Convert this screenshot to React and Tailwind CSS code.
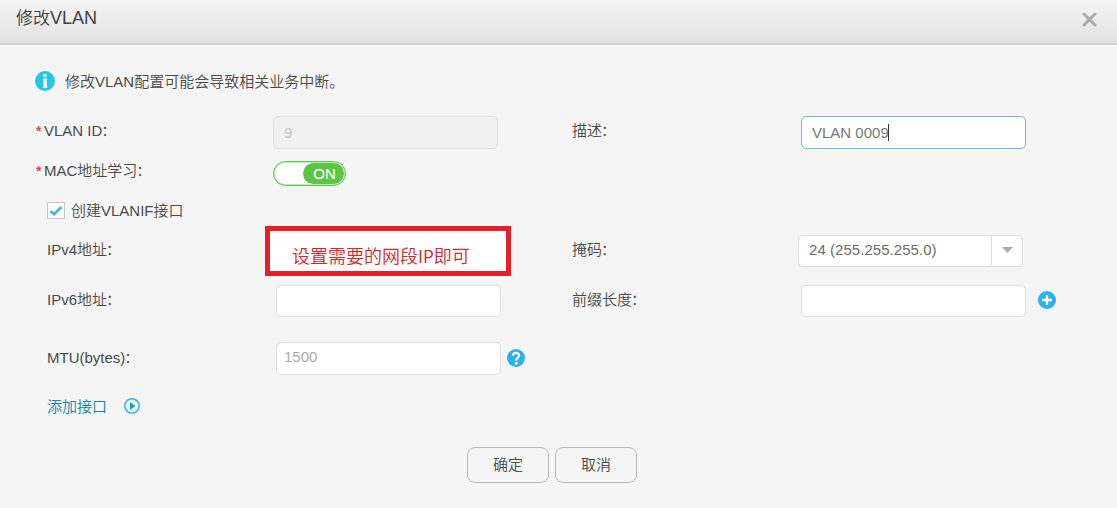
import React, { useState } from "react";

const Label = ({ text }) => (
  <>
    {text}
    <span className="-ml-px">：</span>
  </>
);

const Row = ({ className, label, required, children, label2, control2 }) => (
  <div className={`flex items-center ${className}`}>
    <div className="w-[237px] shrink-0 flex items-center">
      <span className="w-[8px] h-5 leading-[20px] text-[14px] font-bold text-[#e0444c]">
        {required ? "*" : ""}
      </span>
      <span className={required ? "" : "ml-[3px] pb-[2px]"}>
        <Label text={label} />
      </span>
    </div>
    <div className="w-[299px] shrink-0 flex items-center">{children}</div>
    <div className={`w-[227px] shrink-0 ${required ? "" : "pb-[2px]"}`}>
      {label2 && <Label text={label2} />}
    </div>
    <div className="flex items-center">{control2}</div>
  </div>
);

const Toggle = ({ on, onClick }) => (
  <button
    type="button"
    onClick={onClick}
    className="mt-[5px] flex h-[25px] w-[73px] justify-end rounded-full border border-[#62c74e] bg-white p-px ring-1 ring-inset ring-[#62c74e]/40"
  >
    <span className="flex h-[21px] w-[41px] items-center justify-center rounded-full bg-[#5cc548] pl-[2px] text-[15px] text-white">
      {on ? "ON" : "OFF"}
    </span>
  </button>
);

const Input = ({ className, ...props }) => (
  <input
    className={`w-[225px] rounded-[5px] border outline-none ${className}`}
    {...props}
  />
);

const App = () => {
  const [learning, setLearning] = useState(true);

  return (
    <div className="h-[508px] w-[1117px] overflow-hidden bg-[#f5f5f5] font-['Liberation_Sans','Noto_Sans_CJK_SC',sans-serif] text-[15px] font-[350] leading-5 text-[#4a4a4a]">
      {/* Title bar */}
      <div className="flex h-[45px] items-start justify-between border-b-2 border-[#d2d2d2] bg-gradient-to-b from-[#f5f5f5] to-[#e2e2e2] pl-4 pr-[20px]">
        <h1 className="mt-[6px] text-[17px] leading-6 text-[#404040]">
          修改<span className="text-[18px]">VLAN</span>
        </h1>
        <svg className="mt-[12px]" width="15" height="15" viewBox="0 0 15 15">
          <path
            d="M2 2L13 13M13 2L2 13"
            stroke="#aaa"
            strokeWidth="3"
            strokeLinecap="round"
          />
        </svg>
      </div>

      {/* Notice */}
      <div className="flex h-[66px] items-center pl-[35px] pt-[6px]">
        <svg width="20" height="20" viewBox="0 0 20 20">
          <circle cx="10" cy="10" r="10" fill="#26c6e6" />
          <circle cx="10" cy="4.5" r="1.8" fill="#fff" />
          <path d="M8 7.6H11.8V15.4H12.4V16.8H7.8V15.4H8.4V9H8Z" fill="#fff" />
        </svg>
        <span className="ml-[10px] pt-[2px]">
          修改VLAN配置可能会导致相关业务中断。
        </span>
      </div>

      {/* Form */}
      <div className="pl-[36px]">
        <Row
          className="h-[40px]"
          required
          label="VLAN ID"
          label2="描述"
          control2={
            <div className="ml-[2px] mt-[3px] flex h-[33px] w-[225px] items-center rounded-[5px] border border-[#66bfd9] bg-white pl-[10px] text-[#777]">
              VLAN 0009
              <span className="-ml-px h-[17px] w-px bg-[#333]" />
            </div>
          }
        >
          <Input
            className="mt-[3px] h-[33px] border-[#dedede] bg-[#f1f1f1] px-[10px] text-[#c4c4c4]"
            defaultValue="9"
            disabled
          />
        </Row>
        <Row className="h-[40px]" required label="MAC地址学习">
          <Toggle on={learning} onClick={() => setLearning(!learning)} />
        </Row>
        <div className="flex h-[35px] items-center pl-[11px] pt-[4px]">
          <span className="flex h-[17px] w-[18px] items-center justify-center border border-[#bfc6ca] bg-white">
            <svg width="14" height="12" viewBox="0 0 14 12">
              <path
                d="M1.6 6.4L5.2 9.2L12.4 2"
                fill="none"
                stroke="#45b4e6"
                strokeWidth="2.8"
              />
            </svg>
          </span>
          <span className="ml-[6px]">创建VLANIF接口</span>
        </div>
        <Row
          className="h-[50px]"
          label="IPv4地址"
          label2="掩码"
          control2={
            <div className="-ml-px flex h-[32px] w-[225px] rounded-[4px] border border-[#dcdcdc] bg-white text-[#6c6c6c]">
              <span className="flex-1 pl-[10px] leading-[28px] tracking-[0.05px]">
                24 (255.255.255.0)
              </span>
              <span className="mb-px flex w-[31px] items-center justify-center border-l border-[#dcdcdc] pb-px">
                <svg width="11" height="6" viewBox="0 0 11 6">
                  <path d="M0 0H11L5.5 6Z" fill="#aaa" />
                </svg>
              </span>
            </div>
          }
        >
          <div className="-ml-[8px] h-[50px] w-[246px] border-[5px] border-[#e71f28] bg-white pl-[22px] pt-[14px] font-['Open_Sans','Noto_Sans_CJK_SC',sans-serif] text-[18px] leading-[22px] text-[#d9262d]">
            设置需要的网段<span className="font-normal">IP</span>即可
          </div>
        </Row>
        <Row
          className="h-[50px]"
          label="IPv6地址"
          label2="前缀长度"
          control2={
            <>
              <Input className="ml-[2px] h-[32px] border-[#dfdfdf] bg-white px-2" />
              <svg className="mb-[2px] ml-[12px]" width="18" height="18" viewBox="0 0 18 18">
                <circle cx="9" cy="9" r="9" fill="#2bb0f0" />
                <path d="M9 4V14M4 9H14" stroke="#fff" strokeWidth="2.4" />
              </svg>
            </>
          }
        >
          <Input className="ml-[3px] h-[32px] border-[#dfdfdf] bg-white px-2" />
        </Row>
        <Row className="h-[65px]" label="MTU(bytes)">
          <Input
            className="ml-[3px] h-[33px] border-[#dfdfdf] bg-white px-[7px] pb-[5px] text-[#aaa]"
            defaultValue="1500"
          />
          <svg className="mb-[2px] ml-[6px]" width="18" height="18" viewBox="0 0 18 18">
            <circle cx="9" cy="9" r="9" fill="#2bb0f0" />
            <path
              d="M5.9 6.8C5.9 2.9 12.2 3.1 12.2 6.6C12.2 8.7 9.2 8.7 9.2 11.4"
              fill="none"
              stroke="#fff"
              strokeWidth="2.2"
            />
            <circle cx="9.2" cy="14.2" r="1.5" fill="#fff" />
          </svg>
        </Row>
        <div className="flex h-[30px] items-center pl-[11px] text-[#1583b0]">
          <span className="pt-[2px]">添加接口</span>
          <svg className="ml-[17px]" width="17" height="17" viewBox="0 0 17 17">
            <circle
              cx="8"
              cy="8"
              r="7.2"
              fill="#eaf8fe"
              stroke="#45b1e4"
              strokeWidth="1.6"
            />
            <path d="M6 4.1L11.5 8L6 11.9Z" fill="#1c9ad8" />
          </svg>
        </div>
      </div>

      {/* Footer buttons */}
      <div className="mt-[26px] flex gap-[6px] pl-[467px]">
        <button className="h-[36px] w-[82px] rounded-[8px] border border-[#b8b8b8]">
          确定
        </button>
        <button className="h-[36px] w-[82px] rounded-[8px] border border-[#b8b8b8]">
          取消
        </button>
      </div>
    </div>
  );
};

export default App;
